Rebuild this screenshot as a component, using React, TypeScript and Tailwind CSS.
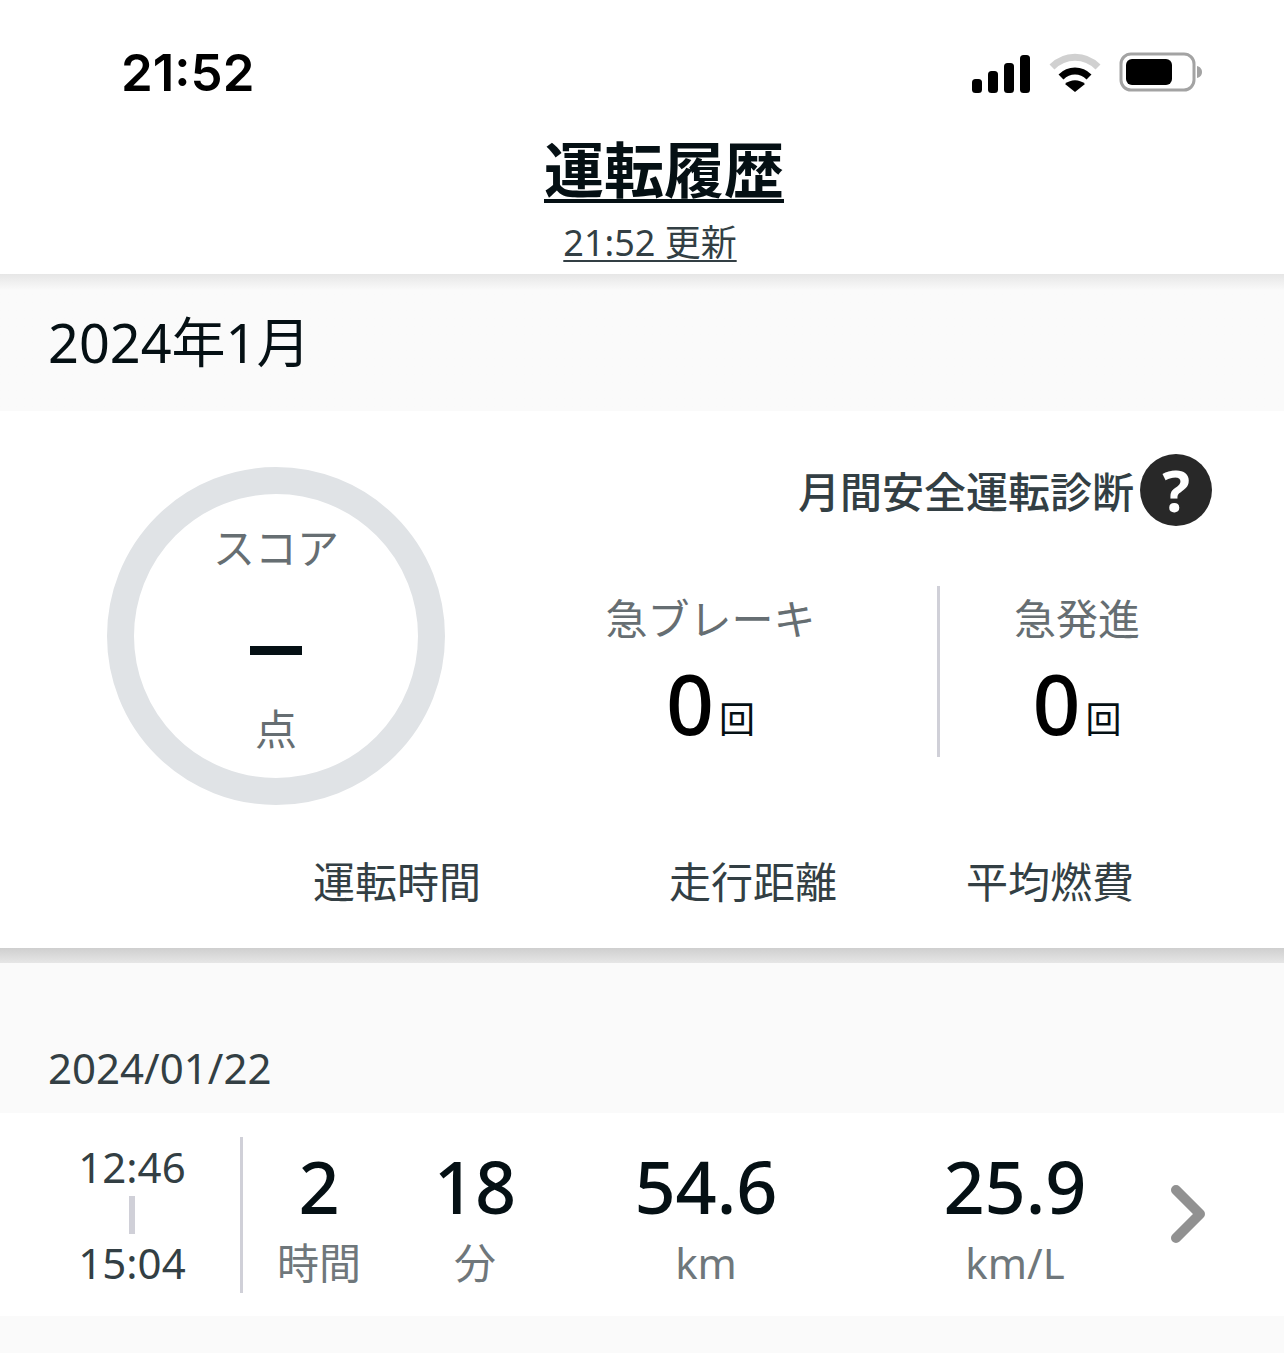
const font = { fontFamily: '"Noto Sans", "Noto Sans CJK JP", sans-serif' };

function Signal() {
  return (
    <svg width="60" height="40" viewBox="0 0 60 40" className="block">
      <rect x="1" y="26" width="10" height="14" rx="3.5" fill="#000" />
      <rect x="17" y="18" width="10" height="22" rx="3.5" fill="#000" />
      <rect x="33" y="10" width="10" height="30" rx="3.5" fill="#000" />
      <rect x="49" y="2" width="10" height="38" rx="3.5" fill="#000" />
    </svg>
  );
}

function Wifi() {
  return (
    <svg width="52" height="40" viewBox="0 0 52 40" className="block">
      <path d="M3 14 C16 1 36 1 49 14" fill="none" stroke="#d0d0d0" strokeWidth="7" />
      <path d="M12 24 C20 16 32 16 40 24" fill="none" stroke="#000" strokeWidth="7" />
      <path d="M26 39 L16 31 C22 26 30 26 36 31 Z" fill="#000" />
    </svg>
  );
}

function Battery() {
  return (
    <svg width="84" height="42" viewBox="0 0 84 42" className="block">
      <rect x="2" y="2" width="73" height="36" rx="10" fill="none" stroke="#a3a3a3" strokeWidth="3" />
      <rect x="7" y="7" width="46" height="26" rx="6" fill="#000" />
      <path d="M78 14 C82 15 83 18 83 20 C83 22 82 25 78 26 Z" fill="#a3a3a3" />
    </svg>
  );
}

function Stat({ label, className }: { label: string; className: string }) {
  return (
    <div className={`flex flex-col items-center ${className}`}>
      <div className="mt-[8px] text-[42px] leading-[50px] text-[#666e72]">{label}</div>
      <div className="mt-[14px] flex items-baseline">
        <span className="text-[84px] font-medium leading-[90px] text-black">0</span>
        <span className="relative -top-[2px] ml-[5px] text-[36px] leading-[40px] text-[#051014]">回</span>
      </div>
    </div>
  );
}

function Value({ value, unit, className }: { value: string; unit: string; className: string }) {
  return (
    <div className={`flex shrink-0 flex-col items-center pt-[5px] ${className}`}>
      <div className="text-[72px] font-medium leading-[84px] text-[#051014]">{value}</div>
      <div className="mt-[7px] text-[42px] leading-[56px] text-[#6f777b]">{unit}</div>
    </div>
  );
}

export default function App() {
  return (
    <div className="h-[1353px] w-[1284px] overflow-hidden bg-[#fafafa]" style={font}>
      <header className="h-[274px] bg-white">
        <div className="flex h-[130px] items-center justify-between pl-[121px] pr-[81px] pt-[16px]">
          <span
            className="text-[51px] font-semibold leading-[60px] text-black"
            style={{ fontFamily: 'Inter, sans-serif' }}
          >
            21:52
          </span>
          <div className="flex items-center gap-[18px]">
            <Signal />
            <Wifi />
            <Battery />
          </div>
        </div>
        <div className="flex flex-col items-center">
          <h1 className="ml-[44px] mt-[4px] text-[60px] font-semibold leading-[72px] text-[#051014] underline decoration-[4px] underline-offset-[6px]">
            運転履歴
          </h1>
          <div className="ml-[16px] mt-[12px] text-[36px] leading-[50px] text-[#333f44] underline decoration-[2px] underline-offset-[4px]">
            21:52 更新
          </div>
        </div>
      </header>

      <div className="flex h-[137px] items-center bg-gradient-to-b from-[#e6e6e6] to-[#fafafa] to-[12%] pb-[2px] pl-[48px] text-[54px] leading-[60px] text-[#051014]">
        2024年1月
      </div>

      <section className="h-[537px] bg-white">
        <div className="flex">
          <div className="ml-[107px] mt-[56px] flex h-[338px] w-[338px] shrink-0 flex-col items-center rounded-full border-[27px] border-[#e0e3e6]">
            <div className="mt-[26px] text-[42px] leading-[56px] text-[#666e72]">スコア</div>
            <div className="mt-[70px] h-[9px] w-[52px] bg-[#051014]" />
            <div className="mt-[46px] text-[42px] leading-[56px] text-[#666e72]">点</div>
          </div>
          <div className="flex-1 pt-[43px]">
            <div className="flex items-center justify-end pr-[72px]">
              <span className="relative top-[2px] text-[42px] font-medium leading-[72px] text-[#333f44]">月間安全運転診断</span>
              <span className="ml-[6px] flex h-[72px] w-[72px] items-center justify-center rounded-full bg-[#282828] text-[58px] font-bold leading-none text-white">
                ?
              </span>
            </div>
            <div className="mt-[60px] flex">
              <Stat label="急ブレーキ" className="ml-[39px] w-[453px]" />
              <div className="h-[171px] w-[3px] bg-[#d0d0d8]" />
              <Stat label="急発進" className="w-[274px]" />
            </div>
          </div>
        </div>
        <div className="mt-[52px] flex text-[42px] leading-[50px] text-[#333f44]">
          <div className="ml-[247px] w-[300px] text-center">運転時間</div>
          <div className="ml-[56px] w-[300px] text-center">走行距離</div>
          <div className="-ml-[3px] w-[300px] text-center">平均燃費</div>
        </div>
      </section>

      <div className="h-[15px] bg-gradient-to-b from-[#cfcfcf] to-[#e6e6e6]" />

      <div className="flex h-[150px] items-end pb-[20px] pl-[48px] text-[42px] leading-[50px] text-[#333f44]">
        2024/01/22
      </div>

      <div className="flex h-[203px] items-center bg-white">
        <div className="ml-[24px] flex w-[216px] shrink-0 flex-col items-center pt-[1px] text-[42px] leading-[50px] text-[#333f44]">
          <div>12:46</div>
          <div className="my-[4px] h-[38px] w-[6px] bg-[#d0d0d8]" />
          <div>15:04</div>
        </div>
        <div className="h-[156px] w-[3px] shrink-0 bg-[#d0d0d8]" />
        <Value value="2" unit="時間" className="w-[152px]" />
        <Value value="18" unit="分" className="w-[160px]" />
        <Value value="54.6" unit="km" className="w-[302px]" />
        <Value value="25.9" unit="km/L" className="w-[316px]" />
        <svg width="36" height="60" viewBox="0 0 36 60" className="ml-[-3px] mt-[-2px] block">
          <path d="M6 6 L30 30 L6 54" fill="none" stroke="#919191" strokeWidth="10" strokeLinecap="round" strokeLinejoin="round" />
        </svg>
      </div>
    </div>
  );
}
